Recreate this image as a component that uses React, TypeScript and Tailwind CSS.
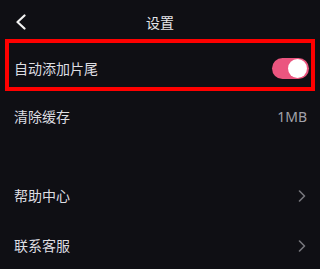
import React from "react";

function Chevron() {
  return (
    <svg width="8" height="12" viewBox="0 0 8 12" fill="none">
      <path d="M1.5 1 L6.5 6 L1.5 11" stroke="#77777d" strokeWidth="1.6" strokeLinecap="round" strokeLinejoin="round" />
    </svg>
  );
}

export default function App() {
  return (
    <div
      className="relative w-[320px] h-[269px] overflow-hidden bg-[#0f0f14] text-[#dedee2]"
      style={{ fontFamily: '"Noto Sans", "Noto Sans CJK SC", sans-serif' }}
    >
      {/* header */}
      <div className="relative flex items-center justify-center h-[44px] pt-[2px]">
        <div className="absolute left-[15px] top-[14px]">
          <svg width="12" height="16" viewBox="0 0 12 16" fill="none">
            <path d="M9.5 1.5 L2.5 8 L9.5 14.5" stroke="#f2f2f2" strokeWidth="2.2" strokeLinecap="round" strokeLinejoin="round" />
          </svg>
        </div>
        <span className="text-[14px] leading-none text-[#e6e6ea]">设置</span>
      </div>

      {/* row 1 */}
      <div className="flex items-center justify-between h-[48px] pl-[14px] pr-[12px]">
        <span className="text-[14px] leading-none mt-[2px]">自动添加片尾</span>
        <div className="relative w-[37px] h-[21px] rounded-full bg-[#eb557f] mr-[-1px]">
          <div className="absolute right-[2px] top-[1px] w-[19px] h-[19px] rounded-full bg-white" />
        </div>
      </div>

      {/* row 2 */}
      <div className="flex items-center justify-between h-[50px] pl-[14px] pr-[13px]">
        <span className="text-[14px] leading-none">清除缓存</span>
        <span className="text-[14px] leading-none text-[#a2a2aa]">1MB</span>
      </div>

      <div className="h-[29px]" />

      {/* row 3 */}
      <div className="flex items-center justify-between h-[50px] pl-[14px] pr-[14px]">
        <span className="text-[14px] leading-none">帮助中心</span>
        <Chevron />
      </div>

      {/* row 4 */}
      <div className="flex items-center justify-between h-[50px] pl-[14px] pr-[14px]">
        <span className="text-[14px] leading-none">联系客服</span>
        <Chevron />
      </div>

      {/* red highlight overlay */}
      <div className="absolute left-[5px] top-[39px] w-[310px] h-[52px] border-[4px] border-[#ff0000] pointer-events-none" />
    </div>
  );
}
